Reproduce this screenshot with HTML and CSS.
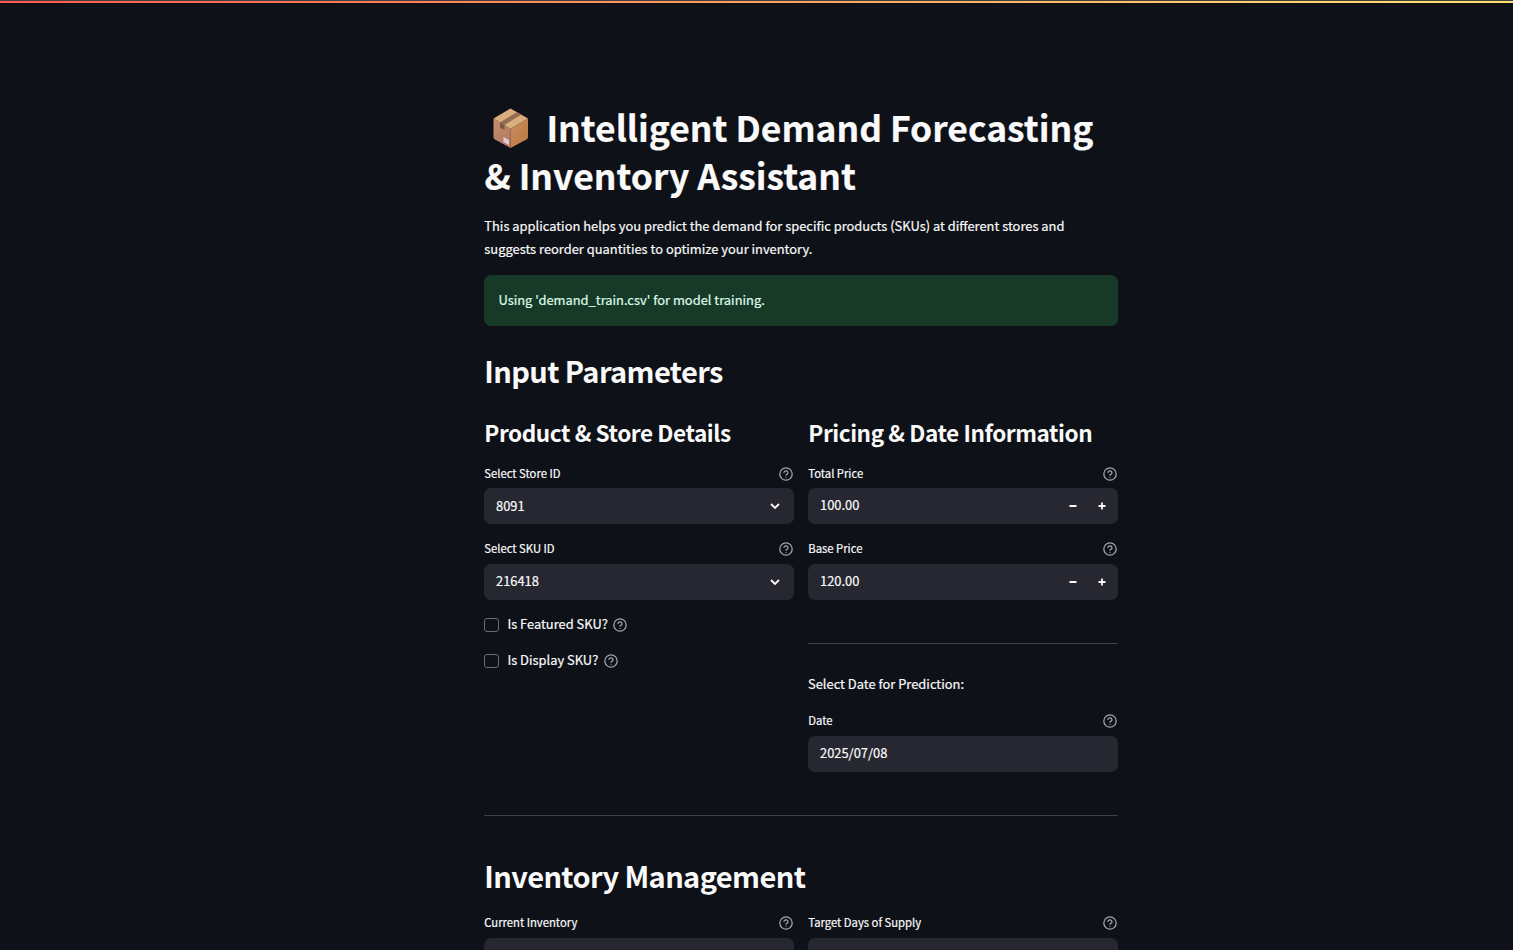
FILE: index.html
```
<!DOCTYPE html>
<html lang="en">
<head>
<meta charset="utf-8">
<title>Intelligent Demand Forecasting</title>
<link rel="stylesheet" href="styles.css">
</head>
<body>
<svg width="0" height="0" class="defs">
  <symbol id="help" viewBox="0 0 24 24"><circle cx="12" cy="12" r="10.6"/><path d="M8.500 9.200a3.500 3.500 0 0 1 6.900.9c0 2.200-3.400 2.600-3.400 4M12 17.600h.01"/></symbol>
  <symbol id="chevron" viewBox="0 0 10 6"><path d="M1 1l4 4 4-4"/></symbol>
</svg>
<div class="decoration"></div>
<main class="page">
  <h1><svg class="box" viewBox="0 0 36 40">
    <defs>
      <linearGradient id="left" x1="0" y1="0" x2="0.6" y2="1"><stop offset="0" stop-color="#c58f6c"/><stop offset="1" stop-color="#b77964"/></linearGradient>
      <linearGradient id="right" x1="0" y1="0" x2="1" y2="1"><stop offset="0" stop-color="#c98d60"/><stop offset="1" stop-color="#b9783e"/></linearGradient>
    </defs>
    <path fill="#d9ae7f" d="M17.5.5L35 10.5 17.5 21 .5 10.5z"/>
    <path fill="url(#left)" d="M.5 10.5L17.5 21v19L2 31.5Q.5 30.500.5 29z"/>
    <path fill="url(#right)" d="M17.5 21L35 10.500V29q0 1.500-1.500 2.500L17.500 40z"/>
    <path fill="#966b55" d="M24 4l4.500 2.500L11.500 17 7 14.500z"/>
    <path fill="#7c5748" d="M7 14.500l4.500 2.500v5L7 19.500z"/>
    <path fill="#dccbd8" d="M10.500 29l5.500 3v5l-5.500-3z"/>
  </svg><span>Intelligent Demand Forecasting</span><br><span>&amp; Inventory Assistant</span></h1>
  <p class="intro">This application helps you predict the demand for specific products (SKUs) at different stores and<br>suggests reorder quantities to optimize your inventory.</p>
  <div class="alert">Using 'demand_train.csv' for model training.</div>
  <h2>Input Parameters</h2>
  <div class="columns">
    <section>
      <h3>Product &amp; Store Details</h3>
      <div class="field"><div class="label"><span>Select Store ID</span><svg class="help"><use href="#help"/></svg></div>
        <div class="input select"><span>8091</span><svg class="chevron"><use href="#chevron"/></svg></div></div>
      <div class="field"><div class="label"><span>Select SKU ID</span><svg class="help"><use href="#help"/></svg></div>
        <div class="input select"><span>216418</span><svg class="chevron"><use href="#chevron"/></svg></div></div>
      <div class="check"><i></i><span>Is Featured SKU?</span><svg class="help"><use href="#help"/></svg></div>
      <div class="check"><i></i><span>Is Display SKU?</span><svg class="help"><use href="#help"/></svg></div>
    </section>
    <section>
      <h3>Pricing &amp; Date Information</h3>
      <div class="field"><div class="label"><span>Total Price</span><svg class="help"><use href="#help"/></svg></div>
        <div class="input"><span>100.00</span><svg class="step" viewBox="0 0 37 8"><path d="M.5 4h7M29.500 4h7M33 .5v7"/></svg></div></div>
      <div class="field"><div class="label"><span>Base Price</span><svg class="help"><use href="#help"/></svg></div>
        <div class="input"><span>120.00</span><svg class="step" viewBox="0 0 37 8"><path d="M.5 4h7M29.500 4h7M33 .5v7"/></svg></div></div>
      <hr class="rule">
      <p class="prompt">Select Date for Prediction:</p>
      <div class="field"><div class="label"><span>Date</span><svg class="help"><use href="#help"/></svg></div>
        <div class="input"><span>2025/07/08</span></div></div>
    </section>
  </div>
  <hr class="divider">
  <h2 class="inventory">Inventory Management</h2>
  <div class="columns">
    <div class="field"><div class="label"><span>Current Inventory</span><svg class="help"><use href="#help"/></svg></div><div class="input"></div></div>
    <div class="field"><div class="label"><span>Target Days of Supply</span><svg class="help"><use href="#help"/></svg></div><div class="input"></div></div>
  </div>
</main>
</body>
</html>
```
FILE: styles.css
```
* { box-sizing: border-box; }
html { height: 100%; overflow: hidden; }
body { margin: 0; height: 100%; overflow: hidden; background: #0e1117; color: #fafafa; font-family: "Noto Sans CJK SC", "Noto Sans", sans-serif; font-size: 12.9px; -webkit-text-stroke: 0.2px; }
h1, h2, h3, p { margin: 0; white-space: nowrap; }
.defs { display: block; }
.decoration { height: 3px; background: linear-gradient(#3d3d42 1px, transparent 1px), linear-gradient(90deg, #ff5a50, #ffdf6c 94%, #ffdf6c); }
.page { width: 634px; margin-left: 484px; padding-top: 100px; }
h1 { height: 95px; font-size: 35.45px; line-height: 48px; font-weight: 700; }
h1 span { padding-left: 0.4px; }
.box { width: 36px; height: 40px; margin: 0 17px 0 9px; vertical-align: -6px; }
.intro { margin-top: 16px; line-height: 23px; padding-left: 0.3px; }
.alert { height: 51px; margin-top: 15px; padding: 0 14.4px; line-height: 50px; border-radius: 7px; background: #173928; color: #dffde9; }
h2 { height: 40px; margin-top: 24px; line-height: 40px; font-size: 29px; font-weight: 600; letter-spacing: -0.6px; padding-left: 0.3px; -webkit-text-stroke: 0; }
.columns { display: grid; grid-template-columns: 310px 310px; gap: 14px; }
h3 { height: 32px; margin: 26px 0 16.5px; line-height: 32px; font-size: 22.56px; font-weight: 600; letter-spacing: -0.43px; padding-left: 0.3px; -webkit-text-stroke: 0; }
.field { margin-bottom: 15.9px; }
.label { display: flex; justify-content: space-between; align-items: center; height: 18px; margin-bottom: 5.7px; font-size: 11.28px; }
.label span { line-height: 16px; padding: 0 0 1.5px 0.3px; }
.help { width: 14px; height: 14px; margin-right: 0.8px; fill: none; stroke: #a3a4a7; stroke-width: 2.2; stroke-linecap: round; stroke-linejoin: round; }
.input { display: flex; justify-content: space-between; align-items: center; height: 36px; padding: 0 12px; border-radius: 7px; background: #262730; }
.input span { line-height: 34px; padding-bottom: 2px; }
.select span { padding-bottom: 1px; }
.chevron { width: 10px; height: 6px; margin-right: 2px; fill: none; stroke: #fafafa; stroke-width: 1.8; }
.step { width: 37px; height: 8px; margin-right: 0; fill: none; stroke: #fafafa; stroke-width: 1.8; }
.check { display: flex; align-items: center; height: 18px; margin: 0.3px 0 18px; line-height: 18px; }
.check i { width: 15px; height: 14px; margin-right: 8.4px; border: 1px solid #6b6c72; border-radius: 3px; }
.check span { padding-bottom: 2px; }
.check .help { margin-left: 5.6px; }
.rule, .divider { height: 1px; margin: 43.2px 0 28.5px; border: 0; background: #3e4046; }
.prompt { height: 23px; line-height: 23px; margin-bottom: 16.5px; }
.divider { margin: 27.4px 0 0; }
.inventory { margin: 39px 0 19px; }
```
